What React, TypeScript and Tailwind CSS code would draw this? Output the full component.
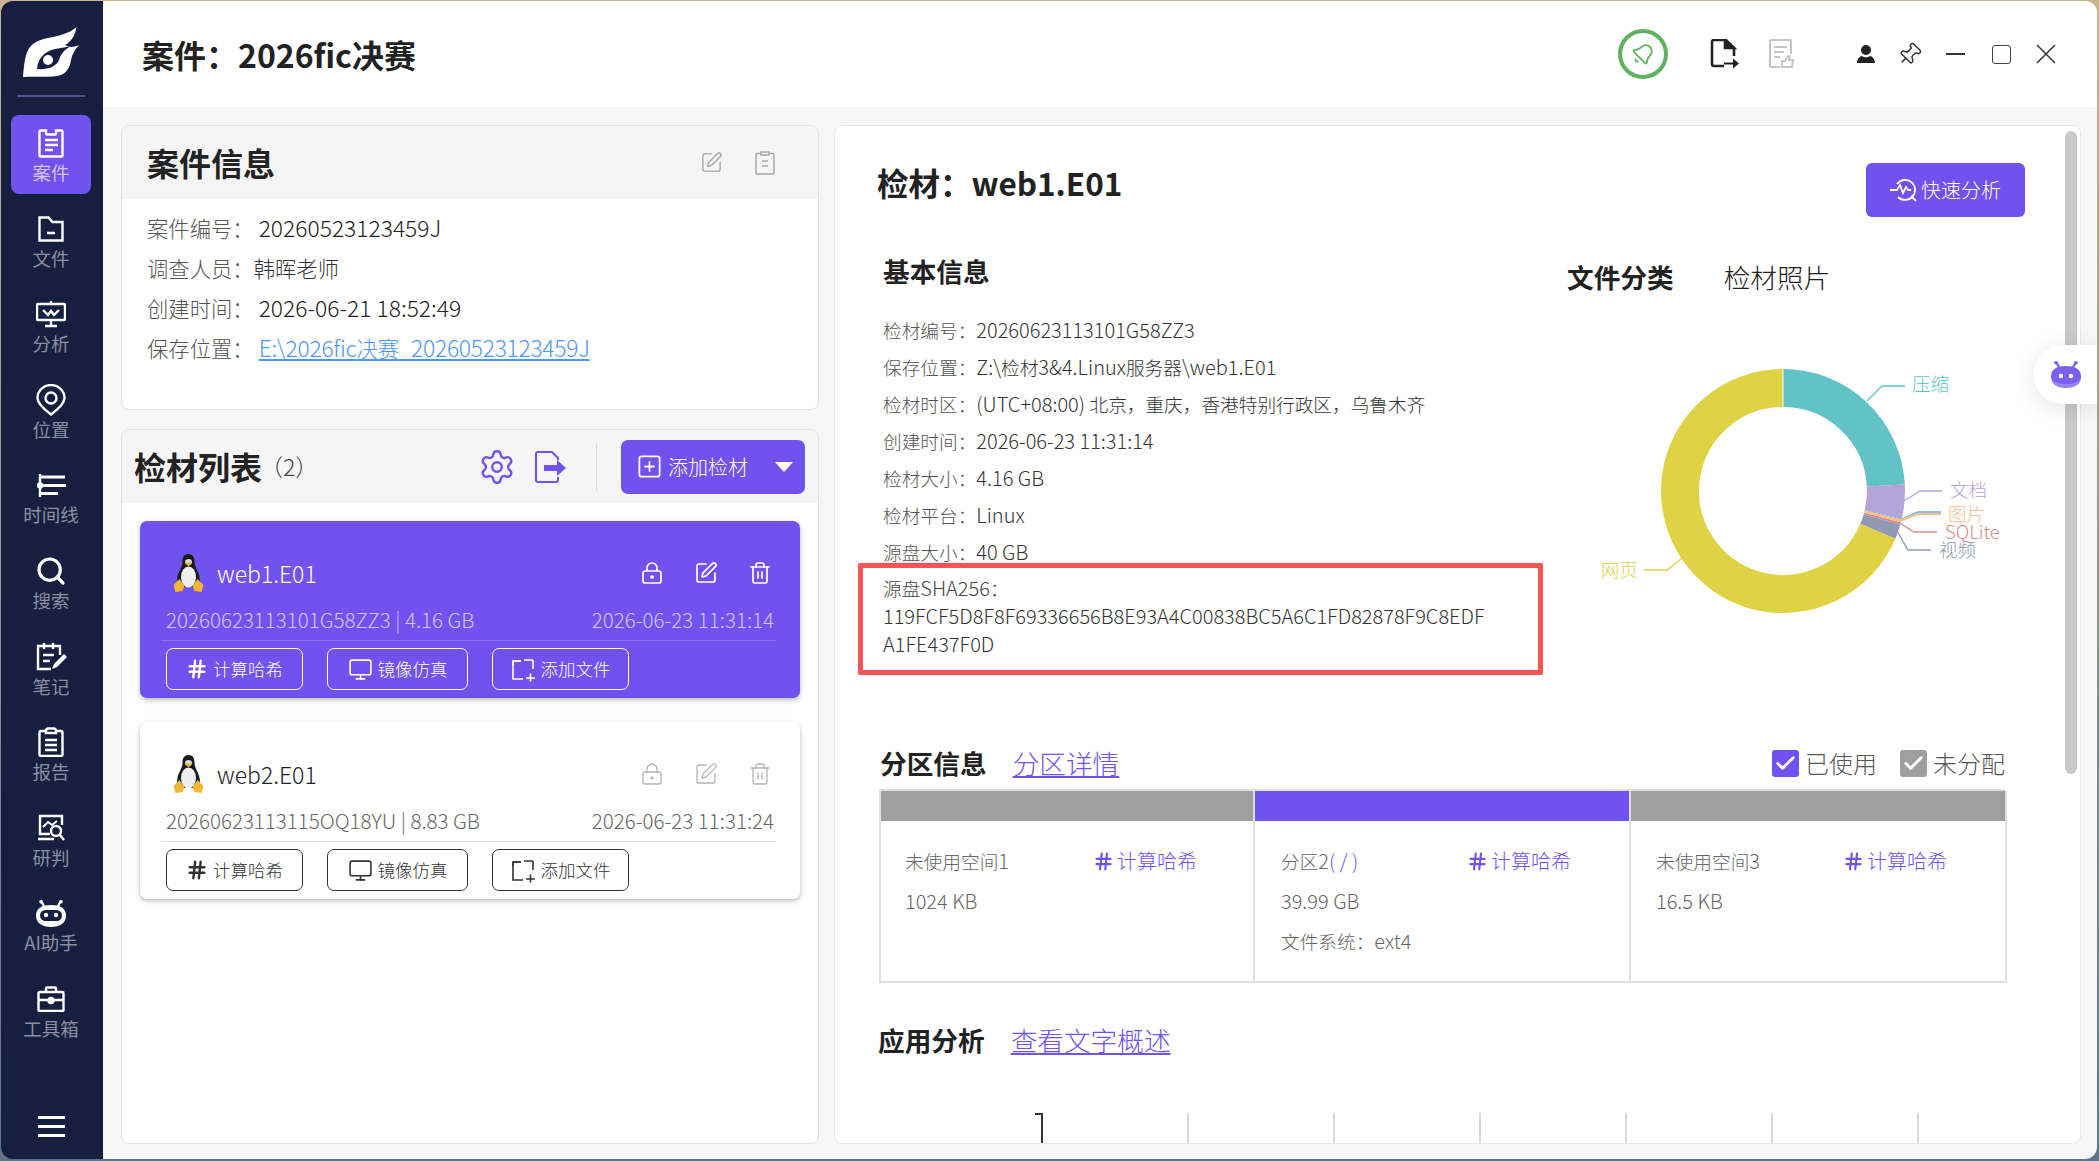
import React from "react";
import { Bell, Check, Hash, LockKeyhole, Monitor, Pin, Search, Settings, SquarePen, SquarePlus, Trash2 } from "lucide-react";

const P = "#7052ee";

function T({ children }: { children: string }) {
  return (
    <>
      {children.split(/([\u0000-\u2fff]+)/).map((s, i) =>
        /^[\u0000-\u2fff]/.test(s) ? (
          <span key={i} className="text-[1.07em]">
            {s}
          </span>
        ) : (
          s
        ),
      )}
    </>
  );
}

function Ico({ w, h, children, vb, className = "" }: { w: number; h: number; vb?: string; children: React.ReactNode; className?: string }) {
  return (
    <svg width={w} height={h} viewBox={vb ?? `0 0 ${w} ${h}`} fill="none" stroke="currentColor" strokeWidth={2.4} className={className}>
      {children}
    </svg>
  );
}

const navIcons: Record<string, React.ReactNode> = {
  案件: (
    <Ico w={26} h={29}>
      <path d="M8 1.5H2.5a1 1 0 0 0-1 1v24a1 1 0 0 0 1 1h21a1 1 0 0 0 1-1v-24a1 1 0 0 0-1-1H18v3a1 1 0 0 1-1 1H9a1 1 0 0 1-1-1z" />
      <path d="M7 11h13M7 16h13M7 21h8" />
    </Ico>
  ),
  文件: (
    <Ico w={26} h={26}>
      <path d="M1.5 24.5V1.5h9l4 4.5h10v18.5z" />
      <path d="M9 17h8" />
    </Ico>
  ),
  分析: (
    <Ico w={30} h={27}>
      <path d="M15 0v3M2 3h26a1 1 0 0 1 1 1v14a1 1 0 0 1-1 1H2a1 1 0 0 1-1-1V4a1 1 0 0 1 1-1z" />
      <path d="M7 9l5 5 3-4 3 4 5-5M15 19v5M9 25h12" />
    </Ico>
  ),
  位置: (
    <Ico w={30} h={32}>
      <path d="M15 30.5C9 26 1.5 20 1.5 14a13.5 13 0 0 1 27 0c0 6-7.500 12-13.500 16.500z" />
      <circle cx="15" cy="14" r="5.500" />
    </Ico>
  ),
  时间线: (
    <Ico w={29} h={23}>
      <path d="M3 0v23" />
      <path strokeWidth={2.8} d="M3 3h25M3 11.500h26M3 19.500h18" />
      <circle cx="3" cy="11.500" r="2" fill="currentColor" />
    </Ico>
  ),
  搜索: <Search size={32} strokeWidth={2.4} />,
  笔记: (
    <Ico w={31} h={28}>
      <path d="M24 12V3H2v23h13M8 0v6M17 0v6M7 12h11M7 18h7" />
      <path fill="currentColor" stroke="none" d="M28 11l3 3-10 10-5 2 2-5z" />
    </Ico>
  ),
  报告: (
    <Ico w={26} h={30}>
      <path d="M8 4H3a1.500 1.500 0 0 0-1.500 1.500v22A1.500 1.500 0 0 0 3 29h20a1.500 1.500 0 0 0 1.500-1.500v-22A1.500 1.500 0 0 0 23 4h-5" />
      <path d="M8 6h10V3.500a2 2 0 0 0-2-2h-6a2 2 0 0 0-2 2zM7 13h12M7 18h12M7 23h12" />
    </Ico>
  ),
  研判: (
    <Ico w={28} h={27}>
      <path d="M25 11V2H3v18h10M1 25h16" />
      <path d="M6 13l5-5 4 3 5-4" strokeWidth={2} />
      <circle cx="19" cy="17" r="5" />
      <path d="M23 21l4 5" />
    </Ico>
  ),
  工具箱: (
    <Ico w={28} h={26}>
      <path d="M2.500 6h23a1 1 0 0 1 1 1v17a1 1 0 0 1-1 1h-23a1 1 0 0 1-1-1V7a1 1 0 0 1 1-1zM9 6V2.500a1 1 0 0 1 1-1h8a1 1 0 0 1 1 1V6M1.500 14h25" />
      <circle cx="14" cy="14.500" r="2.500" fill="currentColor" />
    </Ico>
  ),
};

function Robot({ color, w = 30 }: { color: string; w?: number }) {
  const white = color === "#fff";
  return (
    <svg width={w} height={w * 0.9} viewBox="0 0 30 27" fill="none">
      <path d="M8 6L5 1M22 6l3-5" stroke={color} strokeWidth="2.400" />
      <circle cx="5" cy="1.800" r="1.800" fill={color} />
      <circle cx="25" cy="1.800" r="1.800" fill={color} />
      <path fill={color} d="M15 5c9 0 15 3 15 10.500S24 27 15 27 0 23 0 15.500 6 5 15 5z" />
      {white ? (
        <rect x="4" y="10" width="22" height="11" rx="5.500" fill="#161f40" />
      ) : (
        <path fill="#fff" fillOpacity={0.22} d="M0 17c2 6 7 10 15 10s13-4 15-10c-3 4-8 6-15 6S3 21 0 17z" />
      )}
      <circle cx="10" cy="15" r="2.200" fill="#fff" />
      <circle cx="20" cy="15" r="2.200" fill="#fff" />
    </svg>
  );
}

function NavItem({ label, active }: { label: string; active?: boolean }) {
  return (
    <div className={`flex h-[79px] w-[80px] flex-col items-center rounded-[8px] pt-[12px] mb-[6.6px] ${active ? "bg-[#7052ee]" : ""}`}>
      <div className="flex h-[32px] items-center justify-center text-white">
        {label === "AI助手" ? <Robot color="#fff" /> : navIcons[label]}
      </div>
      <div className={`mt-[1px] whitespace-nowrap text-[18.500px] leading-[24px] ${active ? "text-[#cfc4f8]" : "text-[#8b8f9f]"}`}>{label}</div>
    </div>
  );
}

function Sidebar() {
  return (
    <aside className="flex w-[102px] shrink-0 flex-col items-center bg-[#161f40] pr-[2px]">
      <svg width="60" height="56" viewBox="22 25 60 56" className="mt-[24px]">
        <path fill="#fff" d="M24 77C25 65 26 53 31 47 38 38 53 38 62 35 69 33 74 30 77.500 27 76 35 73 41 66 45 71 48 76 47 80 45 76 50 73 54 72 60 71 68 67 73 62 75 52 78 36 76 24 77Z" />
        <path fill="#161f40" d="M38 69C39 58 46 51 56 49 62 48 68 47 72 46 65 50 62 54 60 60 57 67 48 70 38 69Z" />
        <circle cx="49" cy="60" r="5" fill="#fff" />
      </svg>
      <div className="mt-[14px] h-[2px] w-[68px] bg-[#4d5488]" />
      <div className="mt-[18px] flex flex-col items-center">
        {["案件", "文件", "分析", "位置", "时间线", "搜索", "笔记", "报告", "研判", "AI助手", "工具箱"].map((l, i) => (
          <NavItem key={l} label={l} active={i === 0} />
        ))}
      </div>
      <div className="mt-[59px] flex w-[27px] flex-col gap-[6px]">
        <div className="h-[3px] bg-white" />
        <div className="h-[3px] bg-white" />
        <div className="h-[3px] bg-white" />
      </div>
    </aside>
  );
}

function TopBar() {
  return (
    <header className="relative flex h-[106px] shrink-0 items-center justify-between bg-white pl-[39px] pr-[41px]">
      <h1 className="text-[32px] font-bold leading-none text-[#222]">案件：2026fic决赛</h1>
      <div className="flex items-center">
        <div className="flex h-[50px] w-[50px] items-center justify-center rounded-full border-[4px] border-[#5fb360] text-[#5fb360]">
          <Bell size={24} strokeWidth={1.8} className="rotate-45" />
        </div>
        <svg width="30" height="30" viewBox="0 0 30 30" fill="none" stroke="#222" strokeWidth="2.600" className="ml-[42px]">
          <path d="M14 27H4a2 2 0 0 1-2-2V3a2 2 0 0 1 2-2h12l8 8v8" />
          <path d="M15 1l9 8h-9z" fill="#222" />
          <path d="M14 25h9v-4l6 5-6 5v-4h-9z" fill="#222" stroke="none" transform="translate(0 -1.500)" />
        </svg>
        <svg width="26" height="30" viewBox="0 0 26 30" fill="none" stroke="#c4c4c4" strokeWidth="2" className="ml-[29px]">
          <path d="M11 28H2a1 1 0 0 1-1-1V2a1 1 0 0 1 1-1h19a1 1 0 0 1 1 1v13M5 8h13M5 13h10M5 18h6" />
          <path d="M13 22h3l3-5c1.500 0 2 1 1.500 2.500L20 21h4l-1 7h-10z" />
        </svg>
        <svg width="18" height="18" viewBox="0 0 18 18" fill="#222" className="ml-[62px]">
          <circle cx="9" cy="5" r="5" />
          <path d="M0 18c0-4 3-7 5-7 1 .8 2.500 1.300 4 1.300s3-.5 4-1.300c2 0 5 3 5 7z" />
        </svg>
        <Pin size={25} strokeWidth={1.400} className="ml-[22px] rotate-45 text-[#333]" />
        <div className="ml-[24px] h-[2px] w-[19px] bg-[#333]" />
        <div className="ml-[27px] h-[19px] w-[19px] rounded-[3px] border-[1.500px] border-[#444]" />
        <svg width="20" height="20" viewBox="0 0 20 20" stroke="#333" strokeWidth="1.500" className="ml-[25px]">
          <path d="M1 1l18 18M19 1L1 19" />
        </svg>
      </div>
    </header>
  );
}

function Row({ label, value, link }: { label: string; value: string; link?: boolean }) {
  return (
    <div className="flex h-[40px] items-center text-[21.330px] font-light">
      <span className="text-[#555]">{label}</span>
      <span className={link ? "ml-[5px] tracking-[-0.27px] text-[#4f97f0] underline" : "ml-[5px] text-[#222]"}>
        <T>{value}</T>
      </span>
    </div>
  );
}

function CaseCard() {
  return (
    <section className="h-[285px] overflow-hidden rounded-[8px] border border-[#e2e2e2] bg-white">
      <div className="flex h-[73px] items-center justify-between bg-[#f5f5f5] pl-[25px] pr-[43px]">
        <h2 className="-mt-[2px] text-[32px] font-bold leading-none text-[#222]">案件信息</h2>
        <div className="flex items-center gap-[32px] text-[#a8a8a8]">
          <SquarePen size={23} strokeWidth={1.500} />
          <svg width="20" height="24" viewBox="0 0 20 24" fill="none" stroke="currentColor" strokeWidth="1.500">
            <path d="M6 2.500H2a1 1 0 0 0-1 1v18.500a1 1 0 0 0 1 1h16a1 1 0 0 0 1-1V3.500a1 1 0 0 0-1-1h-4M6 1h8v3H6zM7 10h6M7 15h6" />
          </svg>
        </div>
      </div>
      <div className="pl-[25px] pt-[9px]">
        <Row label="案件编号：" value="20260523123459J" />
        <div className="flex h-[40px] items-center text-[21.330px] font-light">
          <span className="text-[#555]">调查人员：</span>
          <span className="text-[#333]">韩晖老师</span>
        </div>
        <Row label="创建时间：" value="2026-06-21 18:52:49" />
        <Row label="保存位置：" value="E:\2026fic决赛_20260523123459J" link />
      </div>
    </section>
  );
}

function Tux() {
  return (
    <svg width="33" height="40" viewBox="0 0 32 40">
      <path fill="#1b1b1b" d="M16 1C11 1 10 5 10 9 10 14 6 18 5 24 4 28 5 31 8 34H24C27 31 28 28 27 24 26 18 22 14 22 9 22 5 21 1 16 1Z" />
      <ellipse cx="16" cy="24" rx="7.500" ry="10.500" fill="#efefef" />
      <ellipse cx="16" cy="9" rx="3.500" ry="3" fill="#d8d8d8" />
      <path fill="#f2b632" d="M12.500 9.500h7L16 13.500z" />
      <path fill="#f2b632" d="M1 32l6-6 5 7-2 5-7 1zM31 32l-6-6-5 7 2 5 7 1z" />
    </svg>
  );
}

function CardBtn({ w, icon, label, active }: { w: number; icon: React.ReactNode; label: string; active: boolean }) {
  return (
    <div
      style={{ width: w }}
      className={`flex h-[42px] items-center justify-center gap-[5px] rounded-[7px] border text-[17.500px] font-light ${active ? "border-white text-white" : "border-[#333] text-[#333]"}`}
    >
      {icon}
      <span>{label}</span>
    </div>
  );
}

function FolderAdd() {
  return (
    <svg width="25" height="25" viewBox="0 0 25 25" fill="none" stroke="currentColor" strokeWidth="1.600">
      <path d="M12 22H2V5a1 1 0 0 1 1-1h7M13 3h9M22 3v9M15 21h9M19.500 16.500v8" />
      <path d="M2 8V4h8" />
    </svg>
  );
}

function EvidenceCard({ name, sub, time, active }: { name: string; sub: string; time: string; active: boolean }) {
  const tone = active ? "text-white" : "text-[#b4b4b4]";
  return (
    <div className={`h-[177px] rounded-[7px] pl-[26px] pr-[26px] shadow-[0_2px_5px_rgba(0,0,0,0.28)] ${active ? "bg-[#7052ee]" : "bg-white"}`}>
      <div className="flex h-[84px] items-center pt-[20px]">
        <div className="ml-[6px]">
          <Tux />
        </div>
        <div className={`ml-[12px] flex-1 text-[23px] font-light leading-none ${active ? "text-white" : "text-[#222]"}`}>{name}</div>
        <div className={`mr-[2px] flex items-center gap-[30px] ${tone}`}>
          <LockKeyhole size={24} strokeWidth={active ? 1.700 : 1.300} />
          <SquarePen size={24} strokeWidth={active ? 1.700 : 1.300} />
          <Trash2 size={24} strokeWidth={active ? 1.700 : 1.300} />
        </div>
      </div>
      <div className={`flex h-[35px] items-center justify-between pb-[6px] text-[19.200px] font-light ${active ? "text-[#d0c6f9]" : "text-[#666]"}`}>
        <span>
          <T>{sub}</T>
        </span>
        <span>
          <T>{time}</T>
        </span>
      </div>
      <div className={`-ml-[5px] -mr-[2px] h-px ${active ? "bg-[#8a72f2]" : "bg-[#dcdcdc]"}`} />
      <div className="mt-[7px] flex gap-[24px]">
        <CardBtn w={137} active={active} icon={<Hash size={22} strokeWidth={2.600} />} label="计算哈希" />
        <CardBtn w={141} active={active} icon={<Monitor size={25} strokeWidth={1.500} />} label="镜像仿真" />
        <CardBtn w={137} active={active} icon={<FolderAdd />} label="添加文件" />
      </div>
    </div>
  );
}

function ListCard() {
  return (
    <section className="mt-[19px] h-[715px] overflow-hidden rounded-[8px] border border-[#e2e2e2] bg-white">
      <div className="flex h-[73px] items-center bg-[#f5f5f5] pl-[12px]">
        <h2 className="-mt-[2px] text-[32px] font-bold leading-none text-[#222]">检材列表</h2>
        <span className="-ml-[2px] text-[23px] font-light text-[#444]">（2）</span>
        <div className="ml-[auto] flex items-center text-[#7052ee]">
          <Settings size={38} strokeWidth={1.500} />
          <svg width="34" height="34" viewBox="0 0 34 34" fill="none" stroke="currentColor" strokeWidth="2" className="ml-[17px]">
            <path d="M25 10V8l-6-6H5a2 2 0 0 0-2 2v26a2 2 0 0 0 2 2h18a2 2 0 0 0 2-2v-3" />
            <path fill="currentColor" stroke="none" d="M11 15h13v-5l9 8-9 8v-5H11z" />
          </svg>
          <div className="ml-[29px] h-[48px] w-px bg-[#dcdcdc]" />
          <div className="ml-[24px] mr-[13px] flex h-[54px] w-[184px] items-center rounded-[7px] bg-[#7052ee] pl-[15px] text-white">
            <SquarePlus size={27} strokeWidth={1.600} />
            <span className="ml-[5px] text-[20px] font-light">添加检材</span>
            <span className="ml-[27px] h-0 w-0 border-x-[9px] border-t-[10px] border-x-transparent border-t-white" />
          </div>
        </div>
      </div>
      <div className="flex flex-col gap-[24px] pl-[18px] pr-[18px] pt-[18px]">
        <EvidenceCard active name="web1.E01" sub="20260623113101G58ZZ3 | 4.16 GB" time="2026-06-23 11:31:14" />
        <EvidenceCard active={false} name="web2.E01" sub="20260623113115OQ18YU | 8.83 GB" time="2026-06-23 11:31:24" />
      </div>
    </section>
  );
}

function InfoRow({ label, value }: { label: string; value: string }) {
  return (
    <div className="h-[37px] whitespace-nowrap text-[18.670px] font-light leading-[37px] text-[#333]">
      <span className="text-[#555]">{label}</span>
      <T>{value}</T>
    </div>
  );
}

function Donut() {
  const cx = 1783;
  const cy = 492;
  const R = 103;
  const seg = (a: number, b: number) => {
    const pt = (d: number) => {
      const t = ((d - 90) * Math.PI) / 180;
      return `${cx + R * Math.cos(t)} ${cy + R * Math.sin(t)}`;
    };
    return `M${pt(a)}A${R} ${R} 0 ${b - a > 180 ? 1 : 0} 1 ${pt(b)}`;
  };
  const parts: [number, number, string][] = [
    [0, 87, "#62c3c6"],
    [87, 103, "#b5a4d9"],
    [103, 103.500, "#64a8e8"],
    [103.500, 105, "#f8c08a"],
    [105, 106, "#d98a8a"],
    [106, 113, "#8f99b3"],
    [113, 360, "#dfd245"],
  ];
  const lines: [string, string][] = [
    ["1867,402 1882,387 1905,387", "#62c3c6"],
    ["1904,502 1920,492 1942,492", "#b5a4d9"],
    ["1902,520 1918,513 1941,513", "#64a8e8"],
    ["1900,522 1918,515 1941,515", "#f8c08a"],
    ["1898,523 1914,533 1937,533", "#d98a8a"],
    ["1897,532 1908,551 1931,551", "#8f99b3"],
    ["1682,559 1667,571 1644,571", "#dfd245"],
  ];
  const labels: [string, number, number, string][] = [
    ["压缩", 1912, 384, "#62c3c6"],
    ["文档", 1950, 490, "#b5a4d9"],
    ["图片", 1948, 514, "#f8c08a"],
    ["SQLite", 1945, 532, "#d98a8a"],
    ["视频", 1939, 550, "#8f99b3"],
    ["网页", 1601, 570, "#dfd245"],
  ];
  return (
    <svg width="480" height="280" viewBox="1567 350 480 280" className="mt-[54px] block">
      {parts.map(([a, b, c]) => (
        <path key={c} d={seg(a, b)} stroke={c} strokeWidth={38} fill="none" />
      ))}
      <path d={`M${cx} ${cy - 122}V${cy - 84}`} stroke="#fff" strokeWidth={1} />
      {lines.map(([p, c]) => (
        <polyline key={c} points={p} fill="none" stroke={c} strokeWidth={c === "#f8c08a" ? 2 : 1.300} />
      ))}
      {labels.map(([t, x, y, c]) => (
        <text key={t} x={x} y={y} fill={c} fontSize={18.500} fontWeight={300} dominantBaseline="central">
          {t}
        </text>
      ))}
    </svg>
  );
}

function Part({ bar, title, extra, size, fs, hashMl, pad }: { bar: string; title: string; extra?: string; size: string; fs?: string; hashMl: number; pad: string }) {
  return (
    <div className="h-[192px] border-b-2 border-r-2 border-[#e0e0e0]">
      <div style={{ backgroundColor: bar }} className="h-[30px]" />
      <div className={`${pad} pt-[20px] text-[18.670px] font-light leading-[40px] text-[#666]`}>
        <div className="flex items-center">
          <span style={{ width: hashMl }} className="whitespace-nowrap">
            <T>{title}</T>
            {extra && (
              <span className="text-[#7052ee]">
                <T>{extra}</T>
              </span>
            )}
          </span>
          <span className="flex items-center gap-[3px] text-[20px] text-[#7052ee]">
            <Hash size={21} strokeWidth={2.400} />
            计算哈希
          </span>
        </div>
        <div>
          <T>{size}</T>
        </div>
        {fs && (
          <div>
            <T>{fs}</T>
          </div>
        )}
      </div>
    </div>
  );
}

function Check2({ color, label }: { color: string; label: string }) {
  return (
    <div className="flex items-center">
      <div style={{ backgroundColor: color }} className="flex h-[27px] w-[27px] items-center justify-center rounded-[3px] text-white">
        <Check size={23} strokeWidth={3} />
      </div>
      <span className="ml-[6px] text-[24px] font-light text-[#555]">{label}</span>
    </div>
  );
}

function DetailPanel() {
  return (
    <section className="relative h-[1019px] flex-1 overflow-hidden rounded-[8px] border border-[#e8e8e8] bg-white pl-[42px] pt-[37px]">
      <div className="flex h-[54px] items-center justify-between pr-[55px]">
        <h2 className="mb-[14px] text-[31.500px] font-bold leading-none text-[#222]">检材：web1.E01</h2>
        <div className="flex h-[54px] w-[159px] items-center justify-center rounded-[6px] bg-[#7052ee] text-[20px] font-light text-white">
          <svg width="30" height="26" viewBox="0 0 30 26" fill="none" stroke="#fff" strokeWidth="1.800" className="mr-[1px]">
            <path d="M7 7a10 10 0 1 1 1 13M0 13h7l3-5 3 8 3-6 2 3h3M21 19l5 5" />
          </svg>
          快速分析
        </div>
      </div>
      <div className="flex">
        <div className="w-[690px] shrink-0 pl-[6px] pt-[36px]">
          <h3 className="text-[26.670px] font-bold leading-[36px] text-[#222]">基本信息</h3>
          <div className="pt-[21.500px]">
            <InfoRow label="检材编号：" value="20260623113101G58ZZ3" />
            <InfoRow label="保存位置：" value="Z:\检材3&4.Linux服务器\web1.E01" />
            <InfoRow label="检材时区：" value="(UTC+08:00) 北京，重庆，香港特别行政区，乌鲁木齐" />
            <InfoRow label="创建时间：" value="2026-06-23 11:31:14" />
            <InfoRow label="检材大小：" value="4.16 GB" />
            <InfoRow label="检材平台：" value="Linux" />
            <InfoRow label="源盘大小：" value="40 GB" />
          </div>
          <div className="mt-[4.500px] whitespace-nowrap text-[18.670px] font-light leading-[28px] text-[#333]">
            <div className="text-[#444]">
              <T>源盘SHA256：</T>
            </div>
            <div>
              <T>119FCF5D8F8F69336656B8E93A4C00838BC5A6C1FD82878F9C8EDF</T>
            </div>
            <div>
              <T>A1FE437F0D</T>
            </div>
          </div>
        </div>
        <div className="pt-[42px]">
          <div className="flex h-[36px] items-center text-[26.670px] leading-[36px] text-[#222]">
            <span className="font-bold">文件分类</span>
            <span className="ml-[50px] font-light">检材照片</span>
          </div>
          <Donut />
        </div>
      </div>

      <div className="absolute left-[23px] top-[437px] h-[112px] w-[685px] rounded-[2px] border-[5.500px] border-[#f95353]" />

      <div className="mt-[87px] flex h-[36px] items-center pl-[3px] pr-[75px]">
        <h3 className="text-[26.670px] font-bold text-[#222]">分区信息</h3>
        <span className="ml-[26px] text-[26.670px] font-light text-[#7052ee] underline">分区详情</span>
        <div className="ml-auto flex gap-[23px]">
          <Check2 color={P} label="已使用" />
          <Check2 color="#9f9f9f" label="未分配" />
        </div>
      </div>
      <div className="ml-[2px] mt-[8px] grid w-[1126px] grid-cols-[374px_376px_376px] border-l-2 border-t-2 border-[#e0e0e0]">
        <Part bar="#9f9f9f" title="未使用空间1" size="1024 KB" hashMl={188} pad="pl-[24px]" />
        <Part bar={P} title="分区2" extra="( / )" size="39.99 GB" fs="文件系统：ext4" hashMl={186} pad="pl-[26px]" />
        <Part bar="#9f9f9f" title="未使用空间3" size="16.5 KB" hashMl={187} pad="pl-[25px]" />
      </div>

      <div className="mt-[39px] flex h-[36px] items-center pl-[1px]">
        <h3 className="text-[26.670px] font-bold text-[#222]">应用分析</h3>
        <span className="ml-[26px] text-[26.670px] font-light text-[#7052ee] underline">查看文字概述</span>
      </div>
      <div className="ml-[164px] mt-[55px] flex h-[32px]">
        <div className="relative w-[146px] border-l-2 border-[#333]">
          <div className="absolute -left-[8px] top-0 h-[2px] w-[8px] bg-[#333]" />
        </div>
        {[0, 1, 2, 3, 4, 5].map((i) => (
          <div key={i} className="w-[146px] border-l-2 border-[#d9d9d9]" />
        ))}
      </div>

      <div className="absolute right-[3px] top-[5px] h-[643px] w-[12px] rounded-[6px] bg-[#c9c9c9]" />
    </section>
  );
}

export default function App() {
  return (
    <div className="h-[1161px] w-[2099px] overflow-hidden bg-gradient-to-b from-[#c9b48f] to-[#5f7387] pl-[1px] pt-[1px] font-['Noto_Sans_CJK_SC',sans-serif]">
      <div className="relative flex h-[1158px] w-[2096px] overflow-hidden rounded-[12px]">
        <Sidebar />
        <div className="flex flex-1 flex-col bg-[#f7f7f7]">
          <TopBar />
          <div className="flex gap-[15px] pl-[18px] pr-[16px] pt-[18px]">
            <div className="w-[698px] shrink-0">
              <CaseCard />
              <ListCard />
            </div>
            <DetailPanel />
          </div>
        </div>
        <div className="absolute right-0 top-[344px] flex h-[59px] w-[63px] items-center justify-center rounded-l-[28px] bg-white shadow-[0_4px_24px_rgba(0,0,0,0.1)]">
          <Robot color="#7a60ef" />
        </div>
      </div>
    </div>
  );
}
